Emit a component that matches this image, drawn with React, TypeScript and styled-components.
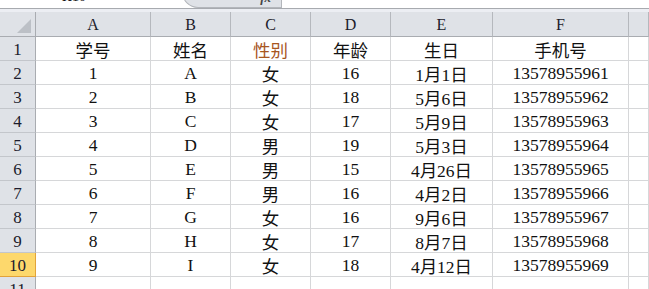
import React from 'react'
import styled, { createGlobalStyle } from 'styled-components'

const GlobalStyle = createGlobalStyle`
	html, body {
		margin: 0;
		padding: 0;
		background: #ffffff;
	}
`

const serif = `"Liberation Serif", "Noto Sans CJK SC", serif`

const Window = styled.div`
	width: 649px;
	height: 289px;
	overflow: hidden;
	display: flex;
	flex-direction: column;
	background: #ffffff;
	font-family: ${serif};
	color: #111;
`

const FormulaBar = styled.div`
	height: 8px;
	display: flex;
	align-items: flex-end;
	overflow: hidden;
	border-bottom: 1px solid #a7aaaf;
	flex-shrink: 0;
`
const NameBox = styled.div`
	width: 182px;
	height: 22px;
	line-height: 22px;
	padding-left: 62px;
	box-sizing: border-box;
	font-size: 14px;
	flex-shrink: 0;
`
const FxBox = styled.div`
	width: 100px;
	height: 22px;
	box-sizing: border-box;
	background: #dfe2e7;
	border: 1px solid #b3b6bb;
	border-top: none;
	border-bottom-left-radius: 16px;
	display: flex;
	justify-content: flex-end;
	align-items: flex-end;
	padding: 0 10px 3px 0;
	flex-shrink: 0;
`
const FxLabel = styled.span`
	font-style: italic;
	font-weight: bold;
	font-size: 13px;
	line-height: 13px;
	color: #444;
`
const FormulaInput = styled.div`
	flex: 1;
	height: 22px;
	background: #fff;
`

const Spacer = styled.div`
	height: 3px;
	background: #eceef3;
	flex-shrink: 0;
`

const Sheet = styled.div`
	display: grid;
	grid-template-columns: 36px 115px 80px 80px 80px 102px 136px 1fr;
	grid-template-rows: 25px repeat(11, 24px);
`

const Corner = styled.div`
	background: #dfe2e7;
	border-right: 1px solid #a9acb1;
	border-bottom: 1px solid #a9acb1;
	box-sizing: border-box;
	display: flex;
	justify-content: flex-end;
	align-items: flex-end;
	padding: 0 4px 3px 0;
`
const CornerMark = styled.div`
	width: 0;
	height: 0;
	border-left: 14px solid transparent;
	border-bottom: 14px solid #bcc0c6;
`

const ColHead = styled.div`
	background: #dfe2e7;
	border-right: 1px solid #b5b8bd;
	border-bottom: 1px solid #a9acb1;
	box-sizing: border-box;
	display: flex;
	align-items: center;
	justify-content: center;
	font-size: 16px;
	padding-top: 1px;
	color: #1c1c2c;
`

const RowHead = styled.div<{ $active?: boolean }>`
	background: ${p => (p.$active ? '#fdd86c' : '#dfe2e7')};
	border-right: 1px solid ${p => (p.$active ? '#e2a43a' : '#a9acb1')};
	border-bottom: 1px solid ${p => (p.$active ? '#e2a23a' : '#c3c6cb')};
	box-sizing: border-box;
	display: flex;
	align-items: center;
	justify-content: center;
	font-size: 17px;
	padding-top: 2px;
	color: #1c1c2c;
`

const Cell = styled.div<{ $accent?: boolean }>`
	border-right: 1px solid #d6d7d9;
	border-bottom: 1px solid #d6d7d9;
	box-sizing: border-box;
	display: flex;
	align-items: center;
	justify-content: center;
	font-size: 17.5px;
	padding-top: 2px;
	white-space: nowrap;
	color: ${p => (p.$accent ? '#a8561f' : '#111')};
`

const cols = ['A', 'B', 'C', 'D', 'E', 'F', '']

const rows: string[][] = [
	['学号', '姓名', '性别', '年龄', '生日', '手机号'],
	['1', 'A', '女', '16', '1月1日', '13578955961'],
	['2', 'B', '女', '18', '5月6日', '13578955962'],
	['3', 'C', '女', '17', '5月9日', '13578955963'],
	['4', 'D', '男', '19', '5月3日', '13578955964'],
	['5', 'E', '男', '15', '4月26日', '13578955965'],
	['6', 'F', '男', '16', '4月2日', '13578955966'],
	['7', 'G', '女', '16', '9月6日', '13578955967'],
	['8', 'H', '女', '17', '8月7日', '13578955968'],
	['9', 'I', '女', '18', '4月12日', '13578955969'],
	['', '', '', '', '', ''],
]

const App: React.FC = () => {
	return (
		<>
			<GlobalStyle />
			<Window>
				<FormulaBar>
					<NameBox>H10</NameBox>
					<FxBox>
						<FxLabel>fx</FxLabel>
					</FxBox>
					<FormulaInput />
				</FormulaBar>
				<Spacer />
				<Sheet>
					<Corner>
						<CornerMark />
					</Corner>
					{cols.map((c, i) => (
						<ColHead key={i}>{c}</ColHead>
					))}
					{rows.map((r, ri) => (
						<React.Fragment key={ri}>
							<RowHead $active={ri === 9}>{ri + 1}</RowHead>
							{r.map((v, ci) => (
								<Cell key={ci} $accent={ri === 0 && ci === 2}>
									{v}
								</Cell>
							))}
							<Cell />
						</React.Fragment>
					))}
				</Sheet>
			</Window>
		</>
	)
}

export default App
